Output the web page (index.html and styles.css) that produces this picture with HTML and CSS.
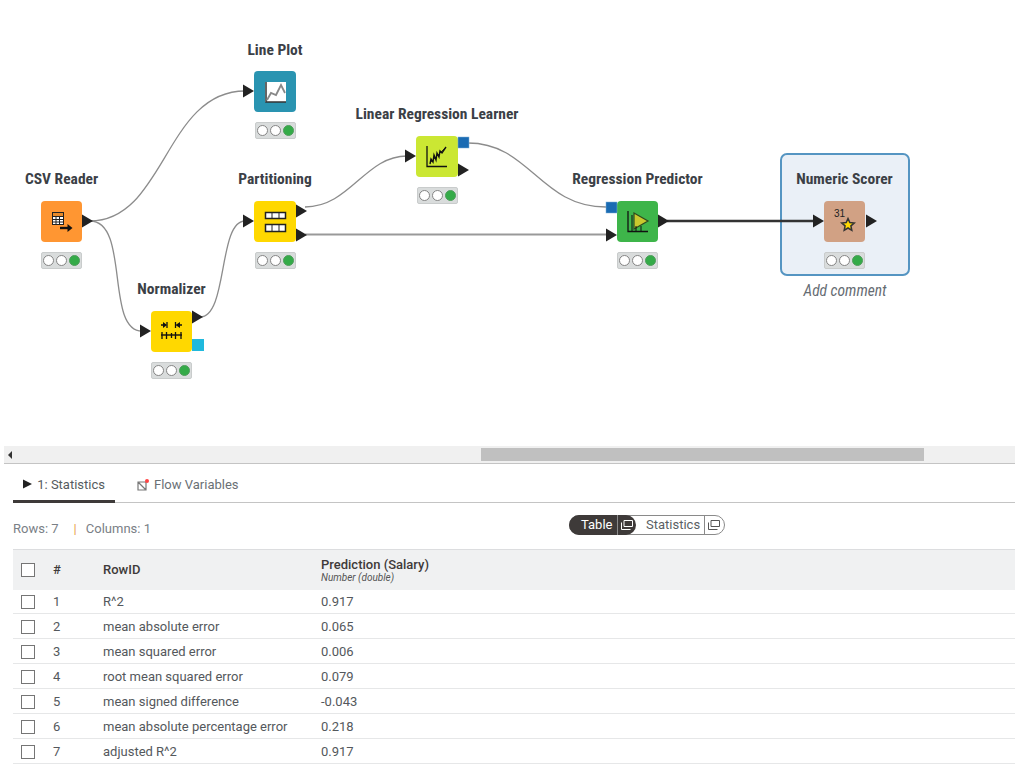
FILE: index.html
```html
<!DOCTYPE html>
<html lang="en">
<head>
    <meta charset="UTF-8">
    <title>Workflow</title>
    <link rel="stylesheet" href="styles.css">
</head>
<body>
    <div class="canvas">
        <div class="annotation"></div>
        <div class="comment">Add comment</div>

        <div class="node node-csv">
            <div class="node-label">CSV Reader</div>
            <div class="node-box orange">
                <svg width="41" height="41" viewBox="0 0 41 41">
                    <rect x="11.500" y="11.500" width="11" height="12" fill="#fff" stroke="#222"/>
                    <rect x="12" y="12" width="10" height="3" fill="#e88a2a"/>
                    <path d="M12 15.500h10M12 18.500h10M12 21h10M15 15v8M18.500 15v8" stroke="#222" fill="none"/>
                    <path d="M19 27h9" stroke="#111" stroke-width="2.400"/>
                    <path d="M26.500 23l5 4-5 4z" fill="#111"/>
                </svg>
            </div>
            <div class="lights"><i></i><i></i><i class="on"></i></div>
        </div>

        <div class="node node-plot">
            <div class="node-label">Line Plot</div>
            <div class="node-box teal">
                <svg width="42" height="41" viewBox="0 0 42 41">
                    <rect x="11" y="11" width="21" height="20" fill="#fff"/>
                    <path d="M12 11v20h20" fill="none" stroke="#333" stroke-width="1.500"/>
                    <path d="M13 29l4-7 5 2 5-10 4 8" fill="none" stroke="#888" stroke-width="1.800"/>
                </svg>
            </div>
            <div class="lights"><i></i><i></i><i class="on"></i></div>
        </div>

        <div class="node node-part">
            <div class="node-label">Partitioning</div>
            <div class="node-box yellow">
                <svg width="42" height="41" viewBox="0 0 42 41">
                    <path d="M11.500 11.500h20v6h-20zM11.500 23.500h20v7h-20z" fill="#fff" stroke="#222" stroke-width="1.500"/>
                    <path d="M18 11v7M25 11v7M18 23v8M25 23v8" stroke="#222"/>
                </svg>
            </div>
            <div class="lights"><i></i><i></i><i class="on"></i></div>
        </div>

        <div class="node node-norm">
            <div class="node-label">Normalizer</div>
            <div class="node-box yellow">
                <svg width="41" height="41" viewBox="0 0 41 41">
                    <path d="M10 24h21" stroke="#111" stroke-width="1.400"/>
                    <path d="M11 21v7M15.500 21v7M20.500 22v5M24.500 21v7M30 21v7" stroke="#111" stroke-width="1.300"/>
                    <path d="M16 11v6M24.500 11v6" stroke="#111" stroke-width="1.300"/>
                    <path d="M10 14h3M28 14h3" stroke="#111" stroke-width="1.300"/>
                    <path d="M12 11l4 3-4 3zM29 11l-4.500 3 4.500 3z" fill="#111"/>
                </svg>
            </div>
            <div class="lights"><i></i><i></i><i class="on"></i></div>
        </div>

        <div class="node node-learn">
            <div class="node-label">Linear Regression Learner</div>
            <div class="node-box lime">
                <svg width="42" height="41" viewBox="0 0 42 41">
                    <path d="M11 10v20.500h20" fill="none" stroke="#111" stroke-width="1.300"/>
                    <path d="M14 28l1-5 2 3 1-7 2 5 1-7 2 4 1-6 2 2 4-6" fill="none" stroke="#111" stroke-width="1.400"/>
                    <path d="M14 27l16-16" stroke="#111" stroke-width="0.800"/>
                </svg>
            </div>
            <div class="lights"><i></i><i></i><i class="on"></i></div>
        </div>

        <div class="node node-pred">
            <div class="node-label">Regression Predictor</div>
            <div class="node-box green">
                <svg width="41" height="41" viewBox="0 0 41 41">
                    <path d="M11 10v20.500h20" fill="none" stroke="#111" stroke-width="1.300"/>
                    <path d="M17 12l14 8-14 8z" fill="#c9c92e" stroke="#2f4a1e" stroke-width="1.200"/>
                    <path d="M15 14v16M19 25v5M24 25v5" stroke="#111"/>
                </svg>
            </div>
            <div class="lights"><i></i><i></i><i class="on"></i></div>
        </div>

        <div class="node node-score">
            <div class="node-label">Numeric Scorer</div>
            <div class="node-box tan">
                <svg width="41" height="41" viewBox="0 0 41 41">
                    <text x="10" y="16" class="score-num">31</text>
                    <path d="M24 17.500L25.800 21.600 30.200 22 26.900 24.900 27.800 29.300 24 27 20.200 29.300 21.100 24.900 17.800 22 22.200 21.600z" fill="#ffd800" stroke="#333" stroke-width="1.500"/>
                </svg>
            </div>
            <div class="lights"><i></i><i></i><i class="on"></i></div>
        </div>

        <svg class="wires" width="1019" height="446" viewBox="0 0 1019 446">
            <g fill="none" stroke="#8c8c8c" stroke-width="1.300">
                <path d="M90 221C165 221 165 91 245 91"/>
                <path d="M90 221C130 221 105 331 142 331"/>
                <path d="M200 317C228 317 218 221 245 221"/>
                <path d="M305 207C350 207 365 156 407 156"/>
                <path d="M468 143C530 143 540 207 606 207"/>
                <path d="M305 234.500H608" stroke="#999" stroke-width="2"/>
            </g>
            <path d="M667 221H815" fill="none" stroke="#333" stroke-width="2.600"/>
            <g fill="#222">
                <path d="M243 84.500l11 6.500-11 6.500z"/>
                <path d="M82 214.500l11 6.500-11 6.500z"/>
                <path d="M243 214.500l11 6.500-11 6.500z"/>
                <path d="M296 204.500l11 6.500-11 6.500z"/>
                <path d="M296 228.500l11 6.500-11 6.500z"/>
                <path d="M140 324.500l11 6.500-11 6.500z"/>
                <path d="M192 310.500l11 6.500-11 6.500z"/>
                <path d="M405 149.500l11 6.500-11 6.500z"/>
                <path d="M458 163.500l11 6.500-11 6.500z"/>
                <path d="M606 228.500l11 6.500-11 6.500z"/>
                <path d="M658 214.500l11 6.500-11 6.500z"/>
                <path d="M813 214.500l11 6.500-11 6.500z"/>
                <path d="M866 214.500l11 6.500-11 6.500z"/>
            </g>
            <rect x="458" y="137" width="11" height="11" fill="#1a6bb3" stroke="#7fb0d8" stroke-width="0.500"/>
            <rect x="606" y="202" width="11" height="11" fill="#1a6bb3" stroke="#7fb0d8" stroke-width="0.500"/>
            <rect x="192" y="339" width="12" height="12" fill="#20b9dd"/>
        </svg>
    </div>

    <div class="scrollbar">
        <span class="scroll-arrow"></span>
        <div class="scroll-thumb"></div>
    </div>

    <div class="panel">
        <div class="tabs">
            <div class="tab active">
                <svg width="10" height="10" viewBox="0 0 10 10"><path d="M0 0l10 5-10 5z" fill="#222"/></svg>
                1: Statistics
            </div>
            <div class="tab">
                <svg width="12" height="12" viewBox="0 0 12 12">
                    <path d="M1 3h8v8H1zM1 3l8 8" fill="none" stroke="#777" stroke-width="1.200"/>
                    <circle cx="10" cy="2" r="2" fill="#f44"/>
                </svg>
                Flow Variables
            </div>
        </div>

        <div class="info">
            <div class="counts">
                <span>Rows: 7</span>
                <span class="pipe">|</span>
                <span>Columns: 1</span>
            </div>
            <div class="toggle">
                <div class="toggle-on">
                    <span class="toggle-text">Table</span>
                    <span class="toggle-icon">
                        <svg width="14" height="12" viewBox="0 0 14 12"><path d="M4 1.500h8.500v6H4zM1.500 3.500v7h9" fill="none" stroke="#fff"/></svg>
                    </span>
                </div>
                <span class="toggle-text">Statistics</span>
                <span class="toggle-icon last">
                    <svg width="14" height="12" viewBox="0 0 14 12"><path d="M4 1.500h8.500v6H4zM1.500 3.500v7h9" fill="none" stroke="#555"/></svg>
                </span>
            </div>
        </div>

        <table class="stats">
            <thead>
                <tr>
                    <th class="col-check"><span class="check"></span></th>
                    <th class="col-num">#</th>
                    <th class="col-id">RowID</th>
                    <th>Prediction (Salary)<small>Number (double)</small></th>
                </tr>
            </thead>
            <tbody>
                <tr><td class="col-check"><span class="check"></span></td><td>1</td><td>R^2</td><td>0.917</td></tr>
                <tr><td class="col-check"><span class="check"></span></td><td>2</td><td>mean absolute error</td><td>0.065</td></tr>
                <tr><td class="col-check"><span class="check"></span></td><td>3</td><td>mean squared error</td><td>0.006</td></tr>
                <tr><td class="col-check"><span class="check"></span></td><td>4</td><td>root mean squared error</td><td>0.079</td></tr>
                <tr><td class="col-check"><span class="check"></span></td><td>5</td><td>mean signed difference</td><td>-0.043</td></tr>
                <tr><td class="col-check"><span class="check"></span></td><td>6</td><td>mean absolute percentage error</td><td>0.218</td></tr>
                <tr><td class="col-check"><span class="check"></span></td><td>7</td><td>adjusted R^2</td><td>0.917</td></tr>
            </tbody>
        </table>
    </div>
</body>
</html>
```

FILE: styles.css
```css
body {
    margin: 0;
    background-color: #fff;
    font-family: Roboto, "Liberation Sans", sans-serif;
    color: #4a4f54;
    overflow: hidden;
}

/* workflow canvas */
.canvas {
    position: relative;
    height: 446px;
}
.wires {
    position: absolute;
    left: 0;
    top: 0;
}
.annotation {
    position: absolute;
    left: 780px;
    top: 153px;
    width: 126px;
    height: 119px;
    background-color: #eaf0f7;
    border: 2px solid #5595c2;
    border-radius: 7px;
}
.comment {
    position: absolute;
    left: 780px;
    top: 282px;
    width: 130px;
    text-align: center;
    font: italic 15.500px "Liberation Sans Narrow", "Roboto Condensed", Roboto, sans-serif;
    color: #666c73;
}
.node {
    position: absolute;
    width: 200px;
    display: flex;
    flex-direction: column;
    align-items: center;
}
.node-csv { left: -38.500px; top: 169px; }
.node-plot { left: 175px; top: 39px; }
.node-part { left: 175px; top: 169px; }
.node-norm { left: 71.500px; top: 279px; }
.node-learn { left: 337px; top: 104px; }
.node-pred { left: 537.500px; top: 169px; }
.node-score { left: 744.500px; top: 169px; }
.node-label {
    height: 22px;
    margin-top: -1px;
    margin-bottom: 11px;
    font: bold 15.500px/22px "Liberation Sans Narrow", "Roboto Condensed", Roboto, sans-serif;
    color: #3b4046;
    white-space: nowrap;
}
.node-plot .node-label {
    margin-top: 0;
    margin-bottom: 10px;
}
.node-box {
    width: 41px;
    height: 41px;
    border-radius: 4px;
}
.node-plot .node-box, .node-part .node-box, .node-learn .node-box { width: 42px; }
.node-box svg { display: block; }
.orange { background-color: #ff9632; }
.teal { background-color: #2a94b1; }
.yellow { background-color: #ffd800; }
.lime { background-color: #cbe733; }
.green { background-color: #3eb54a; }
.tan { background-color: #d1a184; }
.score-num {
    font: 10px "Liberation Sans", sans-serif;
    fill: #222;
}
.lights {
    display: flex;
    justify-content: center;
    align-items: center;
    gap: 2px;
    width: 41px;
    height: 17px;
    margin-top: 10px;
    background-color: #d9dcdc;
    border: 1px solid #c9cccc;
    border-radius: 2px;
    box-sizing: border-box;
}
.lights i {
    width: 11px;
    height: 11px;
    box-sizing: border-box;
    background-color: #fff;
    border: 1px solid #858585;
    border-radius: 50%;
}
.lights i.on {
    background-color: #34ab48;
    border-color: #4f9d5c;
}

/* horizontal scrollbar */
.scrollbar {
    display: flex;
    align-items: center;
    height: 17px;
    margin-left: 4px;
    width: 1011px;
    background-color: #f0f0f0;
    border-bottom: 1px solid #c4c4c4;
}
.scroll-arrow {
    width: 0;
    height: 0;
    margin-left: 4px;
    border-top: 4px solid transparent;
    border-bottom: 4px solid transparent;
    border-right: 4px solid #333;
}
.scroll-thumb {
    width: 443px;
    height: 13px;
    margin-left: 469px;
    background-color: #c0c0c0;
}

/* lower panel */
.panel {
    padding-left: 13px;
    width: 1002px;
    font-size: 13px;
}
.tabs {
    display: flex;
    height: 38px;
    border-bottom: 1px solid #c4c4c4;
}
.tab {
    display: flex;
    align-items: center;
    gap: 5px;
    padding: 4px 10px 0 10px;
    margin-right: 1px;
    height: 37px;
    box-sizing: border-box;
    color: #6a7075;
    white-space: nowrap;
}
.tab.active {
    width: 102px;
    height: 39px;
    border-bottom: 3px solid #3e3a39;
    color: #555b60;
}
.tab + .tab {
    margin-left: 11px;
}
.info {
    display: flex;
    align-items: center;
    height: 46px;
    color: #7a8086;
}
.counts {
    display: flex;
    gap: 15px;
    width: 556px;
    padding-top: 4px;
    box-sizing: border-box;
}
.pipe {
    color: #e8a050;
    margin-right: -6px;
}
.toggle {
    display: flex;
    align-items: center;
    height: 20px;
    margin-top: -3px;
    width: 156px;
    box-sizing: border-box;
    border: 1px solid #8a8a8a;
    border-radius: 10px;
    color: #5a5f64;
}
.toggle-on {
    display: flex;
    align-items: center;
    height: 20px;
    margin: -1px 10px -1px -1px;
    width: 67px;
    background-color: #3e3a39;
    color: #fff;
    border-radius: 10px;
}
.toggle-on .toggle-text { margin-left: 12px; width: 36px; }
.toggle-on .toggle-icon { border-left: 1px solid #8a8a8a; border-right: none; }
.toggle-icon {
    display: flex;
    align-items: center;
    justify-content: center;
    height: 100%;
    width: 18px;
}
.toggle-icon.last {
    margin-left: 4px;
    border-left: 1px solid #8a8a8a;
}
.stats {
    width: 1002px;
    border-collapse: collapse;
    table-layout: fixed;
}
.stats th {
    height: 40px;
    padding: 0;
    text-align: left;
    font-weight: 500;
    color: #3e3a39;
    background-color: #f0f1f2;
    border-top: 1px solid #dcdddf;
    box-sizing: border-box;
    font-size: 13px;
}
.stats th small {
    display: block;
    font-size: 10px;
    font-style: italic;
    font-weight: 400;
    color: #555;
}
.stats td {
    height: 25px;
    padding: 0;
    color: #54585c;
    border-bottom: 1px solid #e6e7e8;
    box-sizing: border-box;
}
.stats td .check {
    margin-top: 2px;
}
.stats tbody tr:first-child td {
    height: 24px;
}
.col-check { width: 40px; }
.col-num { width: 50px; }
.col-id { width: 218px; }
.check {
    display: block;
    width: 14px;
    height: 14px;
    margin-left: 8px;
    background-color: #fff;
    border: 1px solid #757575;
    box-sizing: border-box;
}
```
